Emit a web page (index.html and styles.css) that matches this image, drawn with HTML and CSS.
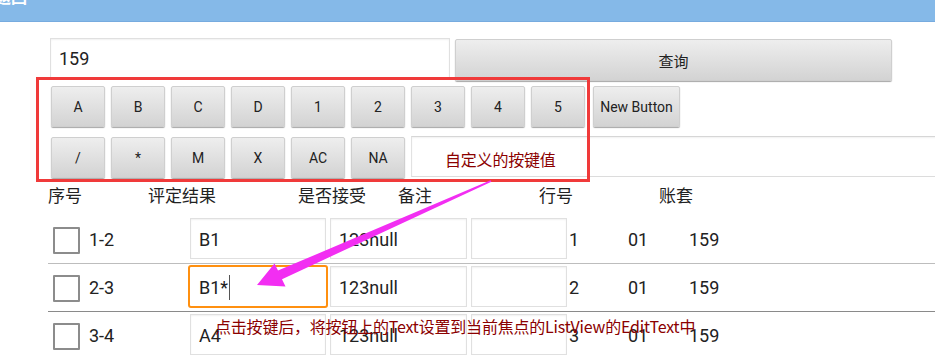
FILE: index.html
```html
<!DOCTYPE html>
<html lang="zh-CN">
<head>
    <meta charset="UTF-8">
    <meta name="viewport" content="width=device-width, initial-scale=1.0">
    <title>查询</title>
    <link rel="stylesheet" href="styles.css">
</head>
<body>
    <div class="titlebar"><span>返回</span></div>

    <div class="search">
        <div class="edit search-input">159</div>
        <div class="btn query">查询</div>
    </div>

    <div class="keys">
        <div class="key-row">
            <div class="btn key">A</div>
            <div class="btn key">B</div>
            <div class="btn key">C</div>
            <div class="btn key">D</div>
            <div class="btn key">1</div>
            <div class="btn key">2</div>
            <div class="btn key">3</div>
            <div class="btn key">4</div>
            <div class="btn key">5</div>
            <div class="btn key wide">New Button</div>
        </div>
        <div class="key-row second">
            <div class="btn key">/</div>
            <div class="btn key">*</div>
            <div class="btn key">M</div>
            <div class="btn key">X</div>
            <div class="btn key">AC</div>
            <div class="btn key">NA</div>
            <div class="edit key-edit"></div>
        </div>
    </div>

    <div class="head">
        <div class="c-no">序号</div>
        <div class="c-res">评定结果</div>
        <div class="c-acc">是否接受</div>
        <div class="c-note">备注</div>
        <div class="c-line">行号</div>
        <div>账套</div>
    </div>

    <div class="list">
        <div class="row">
            <div class="check"></div>
            <div class="label">1-2</div>
            <div class="edit cell e1">B1</div>
            <div class="edit cell e2">123null</div>
            <div class="edit cell e3"></div>
            <div class="val v1">1</div>
            <div class="val v2">01</div>
            <div class="val">159</div>
        </div>
        <div class="row dark">
            <div class="check"></div>
            <div class="label">2-3</div>
            <div class="edit cell e1 focus">B1*<span class="caret"></span></div>
            <div class="edit cell e2">123null</div>
            <div class="edit cell e3"></div>
            <div class="val v1">2</div>
            <div class="val v2">01</div>
            <div class="val">159</div>
        </div>
        <div class="row">
            <div class="check"></div>
            <div class="label">3-4</div>
            <div class="edit cell e1">A4</div>
            <div class="edit cell e2">123null</div>
            <div class="edit cell e3"></div>
            <div class="val v1">3</div>
            <div class="val v2">01</div>
            <div class="val">159</div>
        </div>
    </div>

    <!-- annotations drawn over the screenshot -->
    <div class="mark-box"></div>
    <div class="note note-keys">自定义的按键值</div>
    <div class="note note-list">点击按键后，将按钮上的Text设置到当前焦点的ListView的EditText中</div>
    <svg class="arrow" width="935" height="358" viewBox="0 0 935 358">
        <polygon fill="#f22ef2" points="490.6,180.3 278,270.6 274.5,263.5 257,285 285.5,286.5 282,279.2 491.4,181.7"/>
    </svg>
</body>
</html>
```

FILE: styles.css
```css
*{
    margin: 0;
    padding: 0;
    box-sizing: border-box;
}
body{
    width: 935px;
    height: 358px;
    overflow: hidden;
    background-color: #fff;
    font-family: Roboto, "Noto Sans CJK SC", sans-serif;
    color: #222;
    position: relative;
}
.titlebar{
    height: 22px;
    background-color: #85b9e8;
    border-bottom: 1px solid #77abdf;
    overflow: hidden;
}
.titlebar span{
    display: block;
    color: #fff;
    font-size: 16px;
    line-height: 16px;
    margin-top: -10px;
    margin-left: -5px;
    font-weight: bold;
}

.edit{
    background-color: #fff;
    border: 1px solid #e0e0e0;
    box-shadow: inset 0 1px 2px rgba(0,0,0,0.06);
}
.btn{
    display: flex;
    align-items: center;
    justify-content: center;
    background: linear-gradient(#eeeeee, #d3d3d3);
    border: 1px solid #cfcfcf;
    border-radius: 2px;
    box-shadow: 0 1px 1px rgba(0,0,0,0.35);
    font-size: 14px;
    color: #222;
}

.search{
    display: flex;
    margin-top: 16px;
    padding-left: 50px;
}
.search-input{
    width: 400px;
    height: 42px;
    padding-left: 8px;
    font-size: 18px;
    line-height: 40px;
}
.query{
    width: 437px;
    height: 42px;
    margin-left: 5px;
    margin-top: 1px;
    font-size: 15px;
}

.keys{
    padding-left: 51px;
    margin-top: 5px;
}
.key-row{
    display: flex;
    gap: 6px;
    align-items: flex-start;
}
.key-row.second{
    margin-top: 10px;
}
.key{
    width: 54px;
    height: 41px;
}
.key.wide{
    width: 87px;
    margin-left: 2px;
}
.key-edit{
    flex: 1;
    height: 41px;
    margin-top: -1px;
    margin-right: -20px;
    border-color: #d6d6d6 #e2e2e2 #dcdcdc;
}

.head{
    display: flex;
    margin-top: 7px;
    padding-left: 48px;
    font-size: 17px;
    line-height: 22px;
    color: #222;
}
.c-no{ width: 100px; }
.c-res{ width: 150px; }
.c-acc{ width: 100px; }
.c-note{ width: 141px; }
.c-line{ width: 120px; }

.list{
    margin-top: 9px;
}
.row{
    display: flex;
    align-items: flex-start;
    height: 48px;
    margin-left: 48px;
    padding-left: 5px;
    padding-top: 2px;
    border-bottom: 1px solid #bdbdbd;
}
.row.dark{
    border-bottom-color: #8a8a8a;
}
.check{
    width: 27px;
    height: 27px;
    border: 2px solid #8c8c8c;
    border-radius: 1px;
    margin-top: 9px;
}
.label{
    width: 101px;
    margin-left: 9px;
    font-size: 18px;
    line-height: 43px;
}
.cell{
    height: 41px;
    padding-left: 8px;
    font-size: 18px;
    line-height: 41px;
    position: relative;
}
.e1{ width: 136px; }
.e2{ width: 137px; margin-left: 4px; }
.e3{ width: 96px; margin-left: 4px; }
.cell.focus{
    border: 2px solid #ff9010;
    border-radius: 3px;
    box-shadow: none;
    width: 140px;
    height: 43px;
    margin: -1px -2px 0 -2px;
    padding-left: 9px;
}
.caret{
    display: inline-block;
    width: 1px;
    height: 25px;
    background-color: #555;
    vertical-align: -6px;
    margin-left: 1px;
}
.val{
    font-size: 18px;
    line-height: 43px;
}
.v1{ width: 59px; margin-left: 2px; }
.v2{ width: 61px; }

.mark-box{
    position: absolute;
    left: 36px;
    top: 77px;
    width: 554px;
    height: 105px;
    border: 3px solid #f03a3a;
}
.note{
    position: absolute;
    font-family: "Noto Sans CJK SC", sans-serif;
    font-size: 16px;
    line-height: 16px;
    color: #8b0000;
    white-space: nowrap;
}
.note-keys{
    left: 445px;
    top: 151px;
    letter-spacing: -0.2px;
}
.note-list{
    left: 215px;
    top: 318px;
    letter-spacing: -0.2px;
}
.arrow{
    position: absolute;
    left: 0;
    top: 0;
    pointer-events: none;
}
```
